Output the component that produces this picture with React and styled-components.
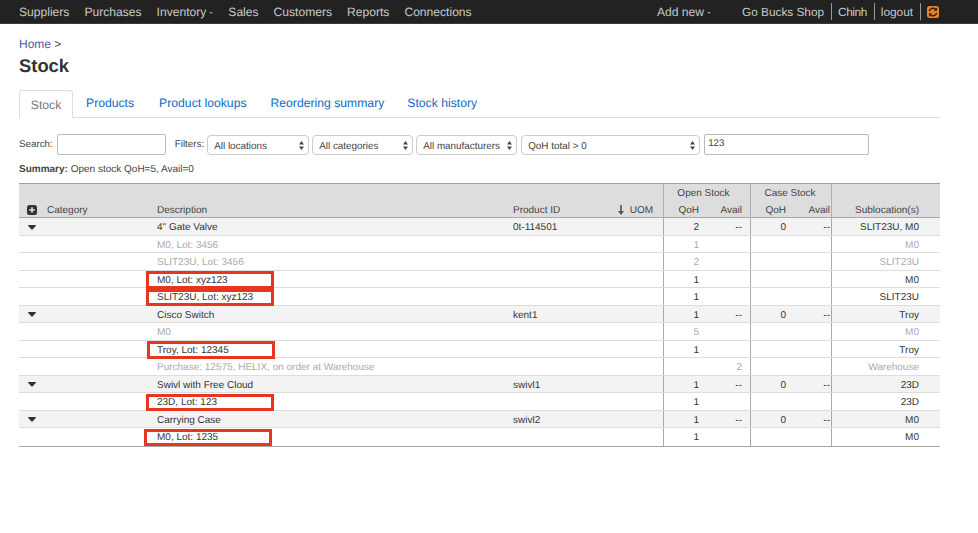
import React from "react";
import styled, { createGlobalStyle } from "styled-components";

const Global = createGlobalStyle`
  html, body { margin: 0; padding: 0; background: #fff; }
  body { font-family: "Liberation Sans", Arial, sans-serif; color: #333; text-rendering: geometricPrecision; }
  * { box-sizing: border-box; }
  input, select { text-rendering: geometricPrecision; }
`;

const NavBar = styled.nav`
  height: 24px;
  background: #222;
  border-bottom: 1px solid #3a3a3a;
  display: flex;
  align-items: center;
  justify-content: space-between;
  padding: 0 39px 0 19px;
  font-size: 12.1px;
  color: #c9c9c9;
`;
const NavGroup = styled.div`
  display: flex;
  align-items: center;
  gap: ${p => p.$gap ?? 15}px;
`;
const NavItem = styled.span`
  display: inline-flex;
  align-items: center;
  white-space: nowrap;
`;
const AddNew = styled(NavItem)`
  margin-right: 25px;
`;
const Caret = styled.i`
  display: inline-block;
  margin-left: 3px;
  margin-top: 2px;
  border-left: 2.5px solid transparent;
  border-right: 2.5px solid transparent;
  border-top: 2.5px solid #888;
`;
const UserLink = styled.span`
  padding: 0 7px 0 6px;
  height: 17px;
  line-height: 16px;
  font-size: 11.8px;
  letter-spacing: ${p => p.$track || 0}px;
  border-left: ${p => (p.$first ? "none" : "1px solid #999")};
  display: inline-flex;
  align-items: center;
  white-space: nowrap;
`;
const LastUser = styled(UserLink)`
  padding-right: 0;
`;

const Main = styled.main`
  padding: 0 38px 0 19px;
`;
const Crumb = styled.div`
  padding-top: 13px;
  height: 32px;
  font-size: 12px;
  line-height: 15px;
  color: #444;
  a { color: #4a5da5; text-decoration: none; }
`;
const Title = styled.h1`
  margin: 0;
  font-size: 18.4px;
  line-height: 20px;
  font-weight: 700;
  color: #333;
  height: 34px;
`;
const Tabs = styled.div`
  display: flex;
  align-items: flex-end;
  height: 28px;
  border-bottom: 1px solid #ddd;
  font-size: 12.2px;
`;
const Tab = styled.a`
  color: #0e6ac4;
  margin-left: ${p => p.$ml}px;
  line-height: 14px;
  padding-bottom: 7px;
  white-space: nowrap;
`;
const ActiveTab = styled.span`
  width: 54px;
  height: 28px;
  margin-bottom: -1px;
  border: 1px solid #ddd;
  border-bottom: 1px solid #fff;
  border-radius: 3px 3px 0 0;
  background: #fff;
  color: #777;
  display: flex;
  align-items: center;
  justify-content: center;
  padding-top: 2px;
`;
const Filters = styled.div`
  display: flex;
  align-items: center;
  margin-top: 16px;
  height: 21px;
  font-size: 9.8px;
  color: #444;
`;
const Label = styled.label`
  margin: ${p => p.$m};
  white-space: nowrap;
`;
const TextBox = styled.input`
  width: ${p => p.$w}px;
  height: 21px;
  margin: ${p => p.$m || 0};
  border: 1px solid #bbb;
  border-radius: 2px;
  padding: 0 3px 2px 3px;
  font: 9.8px "Liberation Sans", Arial, sans-serif;
  color: #444;
  outline: none;
`;
const SelectWrap = styled.div`
  position: relative;
  width: ${p => p.$w}px;
  height: 20px;
  margin: ${p => p.$m || 0};
  margin-top: 1px;
`;
const NativeSelect = styled.select`
  appearance: none;
  width: 100%;
  height: 100%;
  border: 1px solid #ccc;
  border-radius: 4px;
  background: #fff;
  padding: 2px 14px 0 6px;
  font: 9.9px "Liberation Sans", Arial, sans-serif;
  color: #444;
  outline: none;
`;
const SelectArrows = styled.svg`
  position: absolute;
  right: 5px;
  top: 6px;
  width: 5px;
  height: 9px;
  pointer-events: none;
`;
const Summary = styled.p`
  margin: 8px 0 0;
  height: 20px;
  font-size: 10px;
  line-height: 13px;
  color: #444;
`;

const COLS = "24px 110px 356px 101px 53px 45px 42px 45px 36px 109px";

const Table = styled.div`
  width: 921px;
  font-size: 10px;
  border-bottom: 1px solid #a8a8a8;
`;
const Head = styled.div`
  display: grid;
  grid-template-columns: ${COLS};
  grid-template-rows: 17px 18px;
  background: #ddd;
  border-top: 1px solid #a0a0a0;
  border-bottom: 1px solid #aaa;
  height: 35px;
  color: #444;
`;
const HeadGroup = styled.div`
  grid-column: ${p => p.$col};
  grid-row: 1;
  border-left: 1px solid #b0b0b0;
  text-align: center;
  line-height: 19px;
  padding-right: ${p => p.$pr || 0}px;
`;
const HeadBlank = styled.div`
  grid-column: 1 / span 5;
  grid-row: 1;
`;
const HeadBlankEnd = styled.div`
  grid-column: 10;
  grid-row: 1;
  border-left: 1px solid #b0b0b0;
`;
const HeadCell = styled.div`
  grid-row: 2;
  display: flex;
  align-items: center;
  justify-content: ${p => (p.$right ? "flex-end" : "flex-start")};
  padding: ${p => p.$pad || "0 0 0 4px"};
  border-left: ${p => (p.$sep ? "1px solid #b0b0b0" : "none")};
  white-space: nowrap;
`;
const Row = styled.div`
  display: grid;
  grid-template-columns: ${COLS};
  grid-template-rows: minmax(0, 1fr);
  height: 17.5px;
  background: ${p => (p.$parent ? "#f3f3f3" : "#fff")};
  border-bottom: ${p => (p.$last ? "none" : "1px solid #ddd")};
  color: ${p => (p.$muted ? "#aaa" : "#333")};
  line-height: 20px;
`;
const Cell = styled.div`
  position: relative;
  padding: ${p => p.$pad || "0 0 0 4px"};
  text-align: ${p => (p.$right ? "right" : "left")};
  border-left: ${p => (p.$sep ? "1px solid #aaa" : "none")};
  white-space: nowrap;
  display: ${p => (p.$center ? "flex" : "block")};
  align-items: center;
  justify-content: center;
`;
const Highlight = styled.span`
  position: absolute;
  left: ${p => p.$left}px;
  width: 128px;
  top: 0.5px;
  height: 17.5px;
  border: 3px solid #e6361d;
  pointer-events: none;
`;
const DownArrow = styled.svg`
  width: 6px;
  height: 10px;
  margin-right: 6px;
  flex: none;
`;

const Plus = () => (
  <svg width="10" height="10" viewBox="0 0 10 10">
    <rect width="10" height="10" rx="2.5" fill="#333" />
    <path d="M5 2.2v5.6M2.2 5h5.6" stroke="#ddd" strokeWidth="1.7" />
  </svg>
);
const CaretDown = () => (
  <svg width="8" height="5" viewBox="0 0 8 5">
    <path d="M.6 0h6.8c.5 0 .7.5.4.9L4.4 4.6c-.2.3-.6.3-.8 0L.2.9C-.1.5.1 0 .6 0z" fill="#333" />
  </svg>
);
const Refresh = () => (
  <svg width="12" height="12" viewBox="0 0 12 12">
    <rect width="12" height="12" rx="2.5" fill="#e8832a" />
    <path d="M2.4 5.2A3.7 3.7 0 0 1 8.6 3.2" fill="none" stroke="#2a1c10" strokeWidth="1.5" />
    <path d="M10 1.6v3.2H6.8z" fill="#2a1c10" />
    <path d="M9.6 6.8A3.7 3.7 0 0 1 3.4 8.8" fill="none" stroke="#2a1c10" strokeWidth="1.5" />
    <path d="M2 10.4V7.2h3.2z" fill="#2a1c10" />
  </svg>
);

const rows = [
  { parent: true, desc: '4" Gate Valve', id: "0t-114501", q: "2", a: "--", cq: "0", ca: "--", sub: "SLIT23U, M0" },
  { muted: true, desc: "M0, Lot: 3456", q: "1", sub: "M0" },
  { muted: true, desc: "SLIT23U, Lot: 3456", q: "2", sub: "SLIT23U" },
  { desc: "M0, Lot: xyz123", q: "1", sub: "M0", box: -7 },
  { desc: "SLIT23U, Lot: xyz123", q: "1", sub: "SLIT23U", box: -7 },
  { parent: true, desc: "Cisco Switch", id: "kent1", q: "1", a: "--", cq: "0", ca: "--", sub: "Troy" },
  { muted: true, desc: "M0", q: "5", sub: "M0" },
  { desc: "Troy, Lot: 12345", q: "1", sub: "Troy", box: -6 },
  { muted: true, desc: "Purchase: 12575, HELIX, on order at Warehouse", a: "2", sub: "Warehouse" },
  { parent: true, desc: "Swivl with Free Cloud", id: "swivl1", q: "1", a: "--", cq: "0", ca: "--", sub: "23D" },
  { desc: "23D, Lot: 123", q: "1", sub: "23D", box: -7 },
  { parent: true, desc: "Carrying Case", id: "swivl2", q: "1", a: "--", cq: "0", ca: "--", sub: "M0" },
  { desc: "M0, Lot: 1235", q: "1", sub: "M0", box: -9, last: true },
];

const selects = [
  { w: 102, m: "0", t: "All locations" },
  { w: 101, m: "0 0 0 3px", t: "All categories" },
  { w: 101, m: "0 0 0 3px", t: "All manufacturers" },
  { w: 179, m: "0 0 0 4px", t: "QoH total > 0" },
];

export default function App() {
  return (
    <>
      <Global />
      <NavBar>
        <NavGroup>
          <NavItem>Suppliers</NavItem>
          <NavItem>Purchases</NavItem>
          <NavItem>Inventory<Caret /></NavItem>
          <NavItem>Sales</NavItem>
          <NavItem>Customers</NavItem>
          <NavItem>Reports</NavItem>
          <NavItem>Connections</NavItem>
        </NavGroup>
        <NavGroup $gap={0}>
          <AddNew>Add new<Caret /></AddNew>
          <UserLink $first>Go Bucks Shop</UserLink>
          <UserLink $track={-0.4}>Chinh</UserLink>
          <UserLink>logout</UserLink>
          <LastUser><Refresh /></LastUser>
        </NavGroup>
      </NavBar>
      <Main>
        <Crumb><a href="#home">Home</a> &gt;</Crumb>
        <Title>Stock</Title>
        <Tabs>
          <ActiveTab>Stock</ActiveTab>
          <Tab $ml={13}>Products</Tab>
          <Tab $ml={25}>Product lookups</Tab>
          <Tab $ml={24}>Reordering summary</Tab>
          <Tab $ml={23}>Stock history</Tab>
        </Tabs>
        <Filters>
          <Label>Search:</Label>
          <TextBox $w={109} $m="0 0 0 4px" />
          <Label $m="0 3px 0 9px">Filters:</Label>
          {selects.map(s => (
            <SelectWrap key={s.t} $w={s.w} $m={s.m}>
              <NativeSelect defaultValue={s.t}>
                <option>{s.t}</option>
              </NativeSelect>
              <SelectArrows viewBox="0 0 5 9">
                <path d="M2.5 0L5 3.5H0zM2.5 9L0 5.5h5z" fill="#444" />
              </SelectArrows>
            </SelectWrap>
          ))}
          <TextBox $w={165} $m="0 0 0 4px" defaultValue="123" />
        </Filters>
        <Summary><b>Summary:</b> Open stock QoH=5, Avail=0</Summary>
        <Table>
          <Head>
            <HeadBlank />
            <HeadGroup $col="6 / span 2" $pr={7}>Open Stock</HeadGroup>
            <HeadGroup $col="8 / span 2" $pr={2}>Case Stock</HeadGroup>
            <HeadBlankEnd />
            <HeadCell $pad="0 0 0 8px"><Plus /></HeadCell>
            <HeadCell>Category</HeadCell>
            <HeadCell>Description</HeadCell>
            <HeadCell>Product ID</HeadCell>
            <HeadCell $right $pad="0 10px 0 0">
              <DownArrow viewBox="0 0 6 10">
                <path d="M3 0v7" stroke="#555" strokeWidth="1.6" />
                <path d="M0 6h6L3 10z" fill="#555" />
              </DownArrow>
              UOM
            </HeadCell>
            <HeadCell $sep $right $pad="0 9px 0 0">QoH</HeadCell>
            <HeadCell $right $pad="0 8px 0 0">Avail</HeadCell>
            <HeadCell $sep $right $pad="0 9px 0 0">QoH</HeadCell>
            <HeadCell $right $pad="0 1px 0 0">Avail</HeadCell>
            <HeadCell $sep $right $pad="0 21px 0 0">Sublocation(s)</HeadCell>
          </Head>
          {rows.map((r, i) => (
            <Row key={i} $parent={r.parent} $muted={r.muted} $last={r.last}>
              <Cell $center={r.parent} $pad="2px 0 0 1px">{r.parent && <CaretDown />}</Cell>
              <Cell />
              <Cell>
                {r.desc}
                {r.box !== undefined && <Highlight $left={r.box} />}
              </Cell>
              <Cell>{r.id}</Cell>
              <Cell />
              <Cell $sep $right $pad="0 9px 0 0">{r.q}</Cell>
              <Cell $right $pad="0 8px 0 0">{r.a}</Cell>
              <Cell $sep $right $pad="0 9px 0 0">{r.cq}</Cell>
              <Cell $right $pad="0 1px 0 0">{r.ca}</Cell>
              <Cell $sep $right $pad="0 21px 0 0">{r.sub}</Cell>
            </Row>
          ))}
        </Table>
      </Main>
    </>
  );
}
